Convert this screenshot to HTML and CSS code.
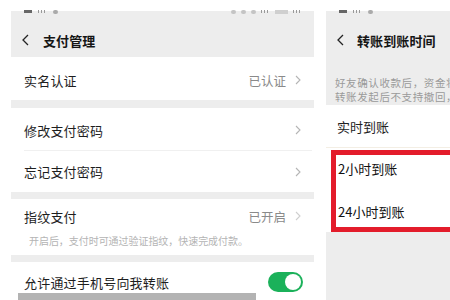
FILE: index.html
```html
<!DOCTYPE html>
<html lang="zh-CN">
<head>
<meta charset="utf-8">
<title>支付管理</title>
<link rel="stylesheet" href="styles.css">
</head>
<body>
<div class="screen">
  <section class="panel left">
    <div class="status">
      <div class="st-left"><i class="sq"></i><i class="bars"></i><i class="dot"></i></div>
      <div class="st-right"><i class="dot"></i><i class="dot"></i><i class="dot"></i><i class="bars"></i><i class="bat"></i><i class="bars"></i></div>
    </div>
    <div class="nav">
      <svg class="back" width="7" height="12" viewBox="0 0 7 12"><polyline points="6,1 1,6 6,11" fill="none" stroke="#222" stroke-width="1.3"/></svg>
      <span class="title">支付管理</span>
    </div>
    <div class="row r-first">
      <span class="label">实名认证</span>
      <span class="val">已认证<svg class="chev" width="6" height="10" viewBox="0 0 6 10"><polyline points="1,1 5,5 1,9" fill="none" stroke="#b5b5b5" stroke-width="1.1"/></svg></span>
    </div>
    <div class="sep s8"></div>
    <div class="row r-mid divided">
      <span class="label">修改支付密码</span>
      <svg class="chev" width="6" height="10" viewBox="0 0 6 10"><polyline points="1,1 5,5 1,9" fill="none" stroke="#b5b5b5" stroke-width="1.1"/></svg>
    </div>
    <div class="row r-low">
      <span class="label">忘记支付密码</span>
      <svg class="chev" width="6" height="10" viewBox="0 0 6 10"><polyline points="1,1 5,5 1,9" fill="none" stroke="#b5b5b5" stroke-width="1.1"/></svg>
    </div>
    <div class="sep s7"></div>
    <div class="fp">
      <div class="row r-fp">
        <span class="label">指纹支付</span>
        <span class="val">已开启<svg class="chev" width="6" height="10" viewBox="0 0 6 10"><polyline points="1,1 5,5 1,9" fill="none" stroke="#cfcfcf" stroke-width="1.1"/></svg></span>
      </div>
      <p class="desc">开启后，支付时可通过验证指纹，快速完成付款。</p>
    </div>
    <div class="sep s7"></div>
    <div class="row r-toggle">
      <span class="label">允许通过手机号向我转账</span>
      <span class="switch"><span class="knob"></span></span>
    </div>
    <div class="homebar"></div>
  </section>

  <section class="panel right">
    <div class="status">
      <div class="st-left"><i class="sq"></i><i class="bars"></i><i class="dot"></i></div>
    </div>
    <div class="nav">
      <svg class="back" width="7" height="12" viewBox="0 0 7 12"><polyline points="6,1 1,6 6,11" fill="none" stroke="#222" stroke-width="1.3"/></svg>
      <span class="title">转账到账时间</span>
    </div>
    <div class="intro">
      <p>好友确认收款后，资金将</p>
      <p>转账发起后不支持撤回，</p>
    </div>
    <div class="opt opt-first">实时到账</div>
    <div class="highlight">
      <div class="opt-in">2小时到账</div>
      <div class="opt-in">24小时到账</div>
    </div>
    <div class="rest"></div>
  </section>
</div>
</body>
</html>
```

FILE: styles.css
```css
* { box-sizing: border-box; margin: 0; padding: 0; }
html, body { width: 450px; height: 300px; overflow: hidden; background: #fff; }
body { font-family: "Noto Sans CJK SC", "Noto Sans", sans-serif; color: #1f1f1f; }

.screen {
  display: flex;
  gap: 12px;
  padding-left: 11px;
  width: 450px;
  height: 300px;
  overflow: hidden;
}

.panel {
  display: flex;
  flex-direction: column;
  height: 300px;
  overflow: hidden;
  background: #fff;
}
.left { width: 303px; position: relative; }
.right { flex: 1; min-width: 0; }

.status {
  height: 14px;
  flex: none;
  display: flex;
  justify-content: space-between;
  align-items: flex-start;
  padding: 10px 12px 0 13px;
  background: linear-gradient(#fff 0, #fff 11px, #ededed 11px);
  overflow: hidden;
}
.st-left, .st-right { display: flex; gap: 6px; align-items: flex-start; }
.st-right { gap: 5px; margin-left: auto; }
.status i { display: block; background: #666; }
.status .sq { width: 8px; height: 3px; }
.status .bars { width: 9px; height: 3px; background: repeating-linear-gradient(90deg, #999 0 1px, transparent 1px 3px); }
.status .dot { width: 5px; height: 4px; border-radius: 2px; background: #aaa; }
.st-right .dot { background: #c4c4c4; }
.status .bat { width: 13px; height: 4px; background: #cfcfcf; }

.nav {
  height: 43px;
  flex: none;
  background: #ededed;
  display: flex;
  align-items: center;
  padding: 9px 0 0 11px;
}
.back { display: block; }
.title { font-size: 13px; font-weight: 700; margin-left: 14px; color: #151515; letter-spacing: 0.1px; }
.right .title { margin-left: 13px; }

.row {
  display: flex;
  align-items: center;
  justify-content: space-between;
  padding: 0 13px 0 13px;
  background: #fff;
  flex: none;
}
.label { font-size: 13px; color: #1e1e1e; letter-spacing: 0.2px; }
.val { display: flex; align-items: center; gap: 9px; font-size: 12.5px; color: #8a8a8a; }
.chev { display: block; }

.r-first { height: 43px; padding-top: 3px; }
.r-mid { height: 43px; padding-top: 1px; }
.divided { position: relative; }
.divided::after {
  content: "";
  position: absolute;
  left: 13px; right: 2px; bottom: 0;
  height: 1px;
  background: #f0f0f0;
}
.r-low { height: 41px; }
.sep { background: #ededed; flex: none; }
.s8 { height: 8px; }
.s7 { height: 7px; }

.fp { background: #fff; padding-bottom: 7px; flex: none; }
.r-fp { height: 34px; }
.desc {
  font-size: 10px;
  line-height: 15px;
  color: #b4b4b4;
  padding-left: 18px;
  letter-spacing: -0.05px;
}

.r-toggle { height: 40px; padding-right: 11px; }
.switch {
  width: 35px; height: 20px;
  border-radius: 10px;
  background: #1bb15a;
  display: flex;
  justify-content: flex-end;
  align-items: center;
  padding: 2px;
}
.knob { width: 16px; height: 16px; border-radius: 50%; background: #fff; }

.homebar {
  position: absolute;
  left: 7px; bottom: 0;
  width: 238px; height: 7px;
  background: #b3b3b3;
}

.intro {
  background: #ededed;
  padding: 19px 0 1px 9px;
  flex: none;
  white-space: nowrap;
}
.intro p { font-size: 10.5px; line-height: 14px; color: #9a9a9a; letter-spacing: 0.6px; }

.opt {
  height: 43px;
  display: flex;
  align-items: center;
  padding-left: 11px;
  font-size: 13px;
  color: #222;
  flex: none;
  border-bottom: 1px solid #f3eee4;
}
.opt-first { padding-top: 1px; }

.highlight {
  margin: 2px 0 0 5px;
  width: 140px;
  border: 5px solid #e31c2b;
  padding: 0 0 1px 2px;
  display: flex;
  flex-direction: column;
  gap: 15px;
  background: #fff;
  flex: none;
}
.opt-in {
  height: 27px;
  display: flex;
  align-items: center;
  font-size: 13px;
  color: #111;
  font-family: "Noto Sans CJK SC", "Liberation Sans", sans-serif;
}
.opt-in + .opt-in { height: 29px; }
.rest { flex: 1; background: #ededed; }
```
